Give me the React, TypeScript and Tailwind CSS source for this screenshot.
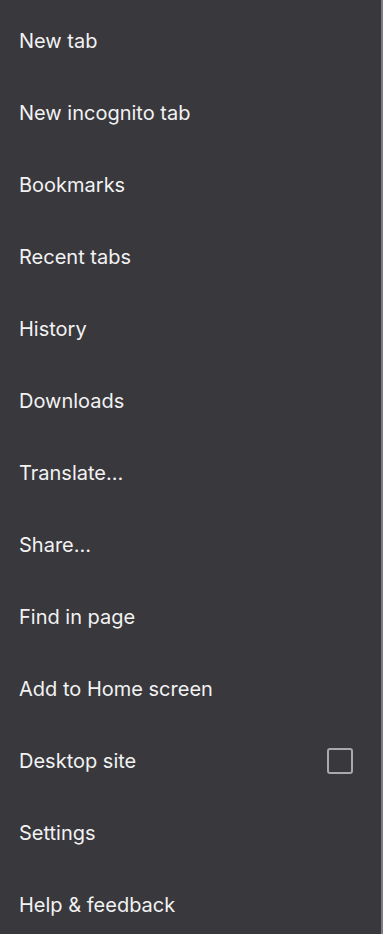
const items = [
  'New tab',
  'New incognito tab',
  'Bookmarks',
  'Recent tabs',
  'History',
  'Downloads',
  'Translate…',
  'Share…',
  'Find in page',
  'Add to Home screen',
  'Desktop site',
  'Settings',
  'Help & feedback',
];

export default function App() {
  return (
    <div
      className="h-[934px] w-[383px] overflow-hidden bg-[#39383d] border-r-2 border-[#7d7c80] pt-[5px]"
      style={{ fontFamily: 'Inter, Roboto, "Noto Sans", sans-serif' }}
    >
      {items.map((label) => (
        <div key={label} className="flex h-[72px] items-center justify-between pl-[19px] pr-[28px]">
          <span className="text-[20px] text-[#f2f2f3]">{label}</span>
          {label === 'Desktop site' && (
            <span className="block h-[26px] w-[26px] rounded-[3px] border-2 border-[#a9a8ab]" />
          )}
        </div>
      ))}
    </div>
  );
}
